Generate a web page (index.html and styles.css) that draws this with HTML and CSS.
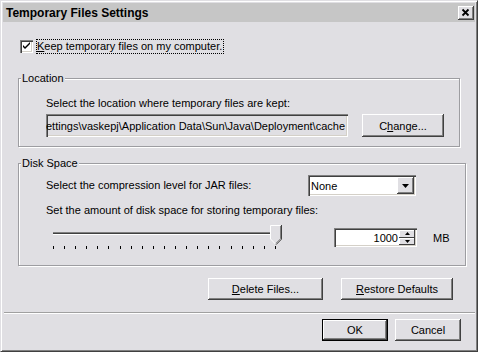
FILE: index.html
```html
<!DOCTYPE html>
<html>
    <head>
        <meta charset="UTF-8">
        <link rel="stylesheet" href="styles.css">
        <title>Temporary Files Settings</title>
    </head>
    <body>
        <div class="window">
            <!-- title bar -->
            <div class="titlebar">
                <span class="title">Temporary Files Settings</span>
                <span class="close-btn">
                    <svg width="16" height="14" viewBox="0 0 16 14"><path d="M4.5 3.5 L10.5 9.5 M10.5 3.5 L4.5 9.5" stroke="#000" stroke-width="1.8" fill="none"/></svg>
                </span>
            </div>

            <div class="content">
                <div class="check-row">
                    <span class="checkbox">
                        <svg width="9" height="9" viewBox="0 0 9 9"><path d="M1 3 L1 5 L3 7 L8 2 L8 0 L3 5 Z" fill="#000"/></svg>
                    </span>
                    <span class="check-label"><u>K</u>eep temporary files on my computer.</span>
                </div>

                <fieldset class="group">
                    <legend>Location</legend>
                    <div class="group-body loc-body">
                        <div class="line">Select the location where temporary files are kept:</div>
                        <div class="path-row">
                            <div class="path-field"><span>C:\Documents and Settings\vaskepj\Application Data\Sun\Java\Deployment\cache</span></div>
                            <button class="btn change-btn">C<u>h</u>ange...</button>
                        </div>
                    </div>
                </fieldset>

                <fieldset class="group disk">
                    <legend>Disk Space</legend>
                    <div class="group-body disk-body">
                        <div class="combo-row">
                            <span class="line combo-label">Select the compression level for JAR files:</span>
                            <div class="combo">
                                <span class="combo-text">None</span>
                                <span class="combo-arrow">
                                    <svg width="7" height="4" viewBox="0 0 7 4"><path d="M0 0 H7 L3.5 4 Z" fill="#000"/></svg>
                                </span>
                            </div>
                        </div>
                        <div class="line amount">Set the amount of disk space for storing temporary files:</div>
                        <div class="slider-row">
                            <div class="slider">
                                <div class="track"></div>
                                <div class="ticks">
                                    <span></span><span></span><span></span><span></span><span></span><span></span><span></span>
                                    <span></span><span></span><span></span><span></span><span></span><span></span><span></span>
                                    <span></span><span></span><span></span><span></span><span></span><span></span><span></span>
                                </div>
                                <svg class="thumb" width="12" height="20" viewBox="0 0 12 20">
                                    <path d="M0 0 H12 V14 L6 20 L0 14 Z" fill="#e0dfe3"/>
                                    <path d="M0.5 14 V0.5 H10.5" stroke="#fff" fill="none"/>
                                    <path d="M0.5 14 L6 19.5" stroke="#fff" fill="none"/>
                                    <path d="M11.5 0 V14.2 L6 19.7" stroke="#404040" fill="none"/>
                                    <path d="M10.5 1 V13.8 L6 18.3" stroke="#808080" fill="none"/>
                                </svg>
                            </div>
                            <div class="spinner">
                                <span class="spin-text">1000</span>
                                <span class="spin-btns">
                                    <span class="spin-btn"><svg width="5" height="3" viewBox="0 0 5 3"><path d="M2.5 0 L5 3 H0 Z" fill="#000"/></svg></span>
                                    <span class="spin-btn"><svg width="5" height="3" viewBox="0 0 5 3"><path d="M0 0 H5 L2.5 3 Z" fill="#000"/></svg></span>
                                </span>
                            </div>
                            <span class="unit">MB</span>
                        </div>
                    </div>
                </fieldset>

                <div class="action-row">
                    <button class="btn delete-btn"><u>D</u>elete Files...</button>
                    <button class="btn restore-btn"><u>R</u>estore Defaults</button>
                </div>
            </div>

            <div class="separator"></div>

            <div class="footer">
                <button class="btn ok-btn">OK</button>
                <button class="btn cancel-btn">Cancel</button>
            </div>
        </div>
    </body>
</html>
```

FILE: styles.css
```css
* {
    box-sizing: border-box;
}

body {
    margin: 0;
    background-color: #ffffff;
    font-family: "Liberation Sans", Arial, sans-serif;
    font-size: 11px;
    color: #000;
}

u {
    text-decoration: underline;
    text-underline-offset: 1px;
}

/* outer dialog frame */
.window {
    width: 478px;
    height: 352px;
    padding: 2px;
    background-color: #e0dfe3;
    border: 1px solid;
    border-color: #e0dfe3 #404040 #404040 #e0dfe3;
    box-shadow: inset 1px 1px #fff, inset -1px -1px #808080;
    display: flex;
    flex-direction: column;
}

.titlebar {
    height: 19px;
    background-color: #c6c6c6;
    display: flex;
    align-items: center;
    justify-content: space-between;
    padding-left: 3px;
    padding-right: 1px;
}

.title {
    font-weight: bold;
    font-size: 12px;
}

.close-btn {
    width: 16px;
    height: 14px;
    display: flex;
    background-color: #e0dfe3;
    box-shadow: inset -1px -1px #404040, inset 1px 1px #fff, inset -2px -2px #808080;
}

.content {
    padding: 0 15px;
}

.check-row {
    display: flex;
    align-items: center;
    margin-top: 17px;
    height: 15px;
}

.checkbox {
    width: 13px;
    height: 13px;
    margin-left: 2px;
    margin-right: 3px;
    background-color: #fff;
    display: flex;
    align-items: center;
    justify-content: center;
    box-shadow: inset 1px 1px #808080, inset 2px 2px #404040, inset -1px -1px #fff, inset -2px -2px #d4d0c8;
}

.check-label {
    border: 1px dotted #000;
    height: 15px;
    line-height: 13px;
    padding: 0 1px 0 0;
}

/* group boxes */
.group {
    margin: 18px 0 0 0;
    padding: 0;
    border: 1px solid #9d9da1;
    box-shadow: inset 1px 1px #fff, 1px 1px #fff;
}

.group legend {
    margin-left: 2px;
    padding: 0 1px;
    line-height: 13px;
    background-color: #e0dfe3;
}

.group-body {
    padding-left: 27px;
    padding-right: 15px;
}

.line {
    line-height: 13px;
    white-space: nowrap;
}

.loc-body {
    padding-top: 12px;
    padding-bottom: 9px;
}

.path-row {
    display: flex;
    margin-top: 4px;
    height: 23px;
}

.path-field {
    width: 302px;
    display: flex;
    align-items: center;
    justify-content: flex-end;
    overflow: hidden;
    white-space: nowrap;
    padding-right: 3px;
    background-color: #e0dfe3;
    box-shadow: inset 1px 1px #808080, inset 2px 2px #404040, inset -1px -1px #fff, inset -2px -2px #d4d0c8;
}

.btn {
    font-family: inherit;
    font-size: 11px;
    color: #000;
    background-color: #e0dfe3;
    border: none;
    padding: 0;
    height: 22px;
    box-shadow: inset -1px -1px #404040, inset 1px 1px #fff, inset -2px -2px #808080;
}

.change-btn {
    width: 82px;
    height: 23px;
    margin-left: auto;
}

.disk {
    margin-top: 10px;
}

.disk-body {
    padding-top: 5px;
    padding-bottom: 16px;
}

.combo-row {
    display: flex;
    align-items: center;
    height: 21px;
}

.combo-label {
    width: 262px;
}

.combo {
    width: 108px;
    height: 21px;
    background-color: #fff;
    display: flex;
    align-items: center;
    padding: 2px;
    box-shadow: inset 1px 1px #808080, inset 2px 2px #404040, inset -1px -1px #fff, inset -2px -2px #d4d0c8;
}

.combo-text {
    flex: 1;
    padding-left: 1px;
}

.combo-arrow {
    width: 17px;
    height: 17px;
    display: flex;
    align-items: center;
    justify-content: center;
    background-color: #e0dfe3;
    box-shadow: inset -1px -1px #404040, inset 1px 1px #fff, inset -2px -2px #808080;
}

.amount {
    margin-top: 8px;
}

.slider-row {
    display: flex;
    align-items: flex-start;
    margin-top: 5px;
}

.slider {
    position: relative;
    width: 223px;
    margin-left: 7px;
}

.track {
    margin-top: 10px;
    height: 3px;
    background-color: #404040;
    border-top: 1px solid #808080;
    border-bottom: 1px solid #fff;
}

.ticks {
    display: flex;
    justify-content: space-between;
    margin-top: 11px;
    height: 3px;
}

.ticks span {
    width: 1px;
    background-color: #000;
}

.thumb {
    position: absolute;
    left: 217px;
    top: 3px;
}

.spinner {
    width: 83px;
    height: 19px;
    margin-top: 6px;
    margin-left: 58px;
    background-color: #fff;
    display: flex;
    align-items: center;
    padding: 2px;
    box-shadow: inset 1px 1px #808080, inset 2px 2px #404040, inset -1px -1px #fff, inset -2px -2px #d4d0c8;
}

.spin-text {
    flex: 1;
    text-align: right;
    padding-right: 1px;
}

.spin-btns {
    width: 16px;
    height: 15px;
    display: flex;
    flex-direction: column;
}

.spin-btn {
    flex: 1;
    display: flex;
    align-items: center;
    justify-content: center;
    background-color: #e0dfe3;
    box-shadow: inset -1px -1px #404040, inset 1px 1px #fff;
}

.unit {
    margin-top: 10px;
    margin-left: 16px;
    line-height: 13px;
}

.action-row {
    display: flex;
    justify-content: flex-end;
    gap: 18px;
    margin-top: 12px;
    padding-right: 7px;
}

.delete-btn {
    width: 115px;
}

.restore-btn {
    width: 112px;
}

.separator {
    margin-top: 12px;
    height: 2px;
    border-top: 1px solid #a0a0a0;
    border-bottom: 1px solid #fff;
    margin-left: 1px;
}

.footer {
    display: flex;
    justify-content: flex-end;
    gap: 7px;
    margin-top: 5px;
    padding-right: 14px;
}

.ok-btn,
.cancel-btn {
    width: 66px;
}

.ok-btn {
    border: 1px solid #000;
}
```
